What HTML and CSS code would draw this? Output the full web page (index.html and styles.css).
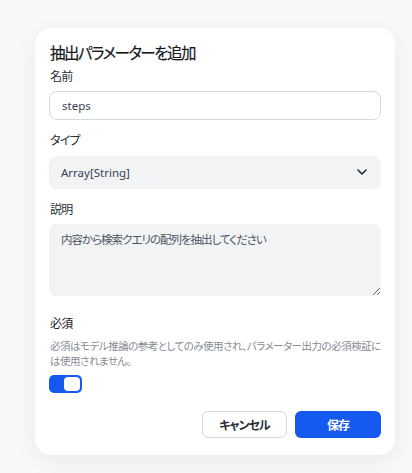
FILE: index.html
```html
<!DOCTYPE html>
<html lang="ja">
<head>
<meta charset="utf-8">
<link rel="stylesheet" href="styles.css">
</head>
<body>
<div class="card">
  <h2 class="title">抽出パラメーターを追加</h2>
  <label class="label l-name">名前</label>
  <div class="input">steps</div>
  <label class="label l-type">タイプ</label>
  <div class="select">
    <span>Array[String]</span>
    <svg class="chev" width="12" height="8" viewBox="0 0 12 8"><path d="M2 2 L6 6 L10 2" fill="none" stroke="#1f2937" stroke-width="1.6" stroke-linecap="round" stroke-linejoin="round"/></svg>
  </div>
  <label class="label l-desc">説明</label>
  <textarea class="textarea" readonly>内容から検索クエリの配列を抽出してください</textarea>
  <div class="label l-req">必須</div>
  <p class="help">必須はモデル推論の参考としてのみ使用され、パラメーター出力の必須検証には使用されません。</p>
  <div class="toggle"><span class="knob"></span></div>
  <div class="actions">
    <button class="btn cancel">キャンセル</button>
    <button class="btn save">保存</button>
  </div>
</div>
</body>
</html>
```
FILE: styles.css
```css
* { box-sizing: border-box; }
html, body { margin: 0; padding: 0; }
body {
  background: #f7f8fa;
  font-family: "Noto Sans", "Noto Sans CJK JP", sans-serif;
  font-feature-settings: "palt";
  color: #1f2937;
  width: 412px;
  height: 473px;
  overflow: hidden;
}
.card {
  margin: 28px 0 0 35px;
  width: 360px;
  height: 427px;
  background: #fff;
  border-radius: 16px;
  box-shadow: 0 6px 24px rgba(0, 0, 0, 0.06);
  padding: 14px 14px 16px 14px;
  display: flex;
  flex-direction: column;
}
.title {
  margin: 0 0 0 1px;
  font-size: 15.5px;
  line-height: 22px;
  font-weight: 400;
  letter-spacing: -1.5px;
  color: #15181d;
  -webkit-text-stroke: 0.2px #15181d;
}
.label {
  display: block;
  font-size: 12px;
  line-height: 16px;
  letter-spacing: -0.8px;
  color: #2b2f36;
  margin-left: 1px;
}
.l-name { margin-top: 5px; }
.l-type { margin-top: 13px; }
.l-desc { margin-top: 14px; }
.l-req { margin-top: 20px; color: #1f2328; }
.input {
  margin-top: 6px;
  height: 29px;
  border: 1px solid #d4d7dd;
  border-radius: 8px;
  padding: 0 12px;
  font-size: 11.5px;
  line-height: 27px;
  color: #374151;
}
.select {
  margin-top: 7px;
  height: 32px;
  background: #f2f3f5;
  border-radius: 8px;
  box-shadow: 0 1px 2px rgba(0,0,0,0.05);
  padding: 0 12px;
  display: flex;
  align-items: center;
  justify-content: space-between;
  font-size: 11.5px;
  color: #374151;
}
.chev { margin-right: 1px; }
.textarea {
  margin-top: 6px;
  height: 72px;
  width: 100%;
  background: #f2f3f5;
  border: none;
  border-radius: 8px;
  padding: 8px 12px;
  font-family: inherit;
  font-feature-settings: "palt";
  font-size: 11.5px;
  letter-spacing: -1px;
  line-height: 16px;
  color: #4b5563;
  resize: vertical;
  outline: none;
}
.help {
  margin: 7px 0 0 1px;
  font-size: 10.5px;
  letter-spacing: -0.5px;
  line-height: 15px;
  color: #858b94;
}
.toggle {
  margin-top: 6px;
  width: 33px;
  height: 18px;
  background: #1659f0;
  border-radius: 5px;
  display: flex;
  justify-content: flex-end;
  align-items: center;
  padding: 0 2px;
}
.knob {
  width: 16px;
  height: 14px;
  background: #fff;
  border-radius: 4px;
}
.actions {
  margin-top: 18px;
  display: flex;
  justify-content: flex-end;
  gap: 8px;
}
.btn {
  height: 27px;
  border-radius: 6px;
  font-family: inherit;
  font-feature-settings: "palt";
  font-size: 12px;
  font-weight: 700;
  letter-spacing: -1px;
  padding: 0;
  cursor: pointer;
}
.cancel {
  width: 85px;
  background: #fff;
  border: 1px solid #d4d7dd;
  color: #2b2f36;
}
.save {
  width: 86px;
  background: #1659f0;
  border: none;
  color: #fff;
}
```
